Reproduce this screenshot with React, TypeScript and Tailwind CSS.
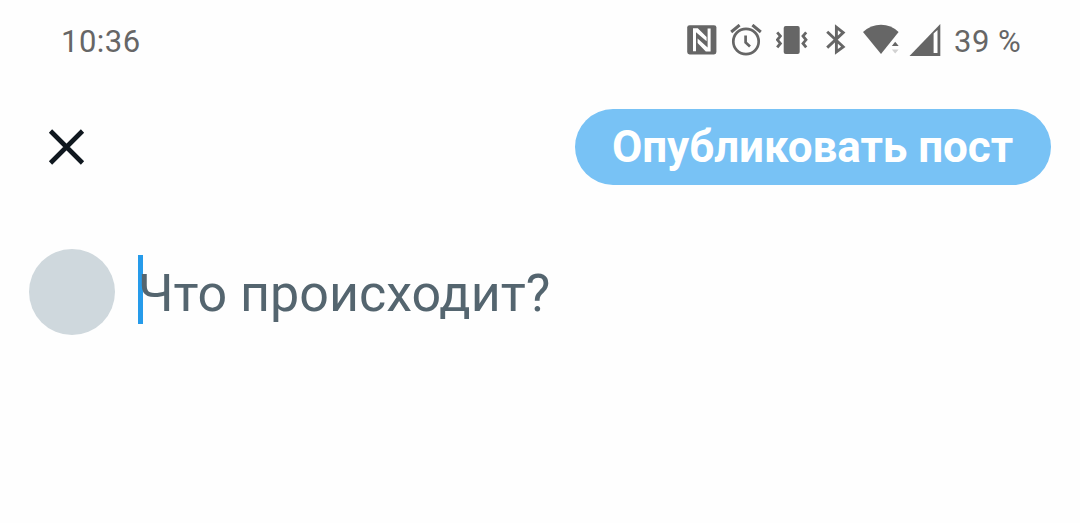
import React from "react";

function NfcIcon() {
  return (
    <svg className="h-8 w-[30px]" viewBox="0 0 30 32">
      <rect x="0.2" y="1.2" width="29.2" height="29.2" rx="2.4" fill="#666" />
      <path d="M6 27.2V4.2H10.8L19.6 13V17.2L9 8.2V27.2Z" fill="#fff" />
      <path d="M23.6 4.4V27.4H18.8L10.6 19V14.6L20.6 23.4V4.4Z" fill="#fff" />
    </svg>
  );
}

function AlarmIcon() {
  return (
    <svg className="h-8 w-8" viewBox="0 0 32 32" fill="none" stroke="#666">
      <circle cx="16" cy="17.5" r="12.7" strokeWidth="2.7" />
      <path d="M1.2 8L9.6 1M30.8 8L22.4 1" strokeWidth="3" />
      <path d="M15.6 11.5V18.4L20 22.6" strokeWidth="2.7" />
    </svg>
  );
}

function VibrateIcon() {
  return (
    <svg className="h-8 w-8" viewBox="0 0 32 32" fill="none">
      <rect x="7.7" y="2" width="16" height="28" rx="2" fill="#666" />
      <path
        d="M1.2 8.4L4.4 12L1.4 15.8L4.4 19.4L1.2 23.4M30.2 8.4L27 12L30 15.8L27 19.4L30.2 23.4"
        stroke="#666"
        strokeWidth="2.8"
      />
    </svg>
  );
}

function BluetoothIcon() {
  return (
    <svg className="h-8 w-5" viewBox="0 0 20 32" fill="none">
      <path
        d="M1.2 7.8L17.2 22.8L10.4 27.8V3.2L17.2 8.6L1.2 23.6"
        stroke="#666"
        strokeWidth="2.9"
      />
    </svg>
  );
}

function WifiIcon() {
  return (
    <svg className="h-8 w-9" viewBox="0 0 36 32">
      <path d="M0 8Q8 0.8 18 0.8T35.6 8L18 30Z" fill="#666" />
      <path d="M27.6 22.8L32.2 17.2L38 22.8V32H27.6Z" fill="#fff" />
      <path d="M28.8 22L32.2 17.8L35.7 22Z" fill="#666" />
      <path d="M28.8 25.4H35.7L32.2 29.6Z" fill="#d2d2d2" />
    </svg>
  );
}

function SignalIcon() {
  return (
    <svg className="h-8 w-8" viewBox="0 0 32 32">
      <path d="M0.5 32L31.3 0V32Z" fill="#666" />
      <path d="M24.6 9.6L28.5 6V29H24.6Z" fill="#fff" />
    </svg>
  );
}

export default function App() {
  return (
    <main className="flex h-[523px] w-[1080px] flex-col overflow-hidden bg-[#fefefe] font-['Roboto',sans-serif]">
      <header className="flex h-20 items-center justify-between pr-[59px] pl-[61px] text-[31px] leading-8 text-[#666]">
        <time className="mt-[3px] tracking-[0.5px]">10:36</time>
        <div className="flex items-center">
          <div className="flex items-center">
            <NfcIcon />
            <div className="ml-[13px] flex"><AlarmIcon /></div>
            <div className="ml-[14px] flex"><VibrateIcon /></div>
            <div className="ml-[18px] flex"><BluetoothIcon /></div>
            <div className="ml-[17px] flex"><WifiIcon /></div>
            <div className="ml-[10px] flex"><SignalIcon /></div>
          </div>
          <span className="mt-[3px] ml-[13px] w-[67px] tracking-[0.5px] whitespace-nowrap">39 %</span>
        </div>
      </header>

      <nav className="mt-[29px] flex h-[76px] shrink-0 items-center justify-between pr-[29px] pl-12">
        <button aria-label="Закрыть" className="flex">
          <svg className="h-[38px] w-[38px]" viewBox="0 0 38 38">
            <path d="M2.5 3L34.5 35M34.5 3L2.5 35" stroke="#10181f" strokeWidth="4.6" />
          </svg>
        </button>
        <button className="flex h-[76px] w-[476px] items-center justify-center rounded-full bg-[#78c2f5] pr-px text-[44px] font-bold tracking-[-0.06px] whitespace-nowrap text-white">
          Опубликовать пост
        </button>
      </nav>

      <section className="mt-16 flex items-center pl-[29px]">
        <div className="h-[86px] w-[86px] rounded-full bg-[#cfd8dd]" />
        <div className="-mt-[5px] ml-[23px] flex h-[69px] items-center">
          <div className="h-[69px] w-[5px] bg-[#269bea]" />
          <p className="mt-[8px] -ml-[5px] text-[52px] leading-[68px] whitespace-nowrap text-[#54656f]">
            Что происходит?
          </p>
        </div>
      </section>
    </main>
  );
}
